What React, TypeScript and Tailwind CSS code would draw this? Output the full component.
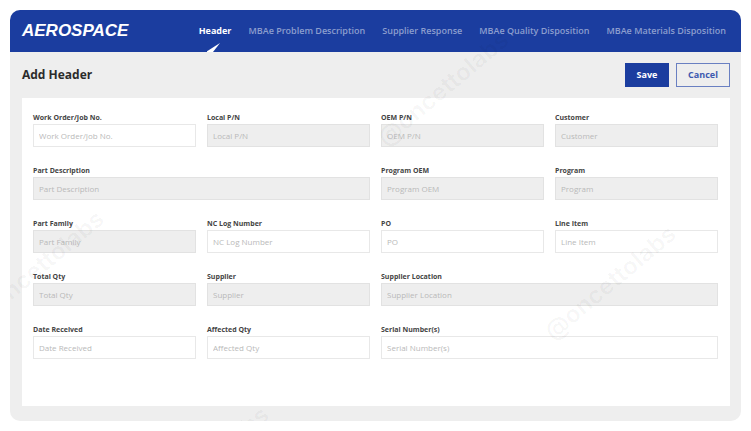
import { clsx } from "clsx";

type Field = {
  id: string;
  label: string;
  locked?: boolean;
  span?: "double";
};

const fields: Field[] = [
  { id: "work-order", label: "Work Order/Job No." },
  { id: "local-pn", label: "Local P/N", locked: true },
  { id: "oem-pn", label: "OEM P/N", locked: true },
  { id: "customer", label: "Customer", locked: true },
  { id: "part-description", label: "Part Description", locked: true, span: "double" },
  { id: "program-oem", label: "Program OEM", locked: true },
  { id: "program", label: "Program", locked: true },
  { id: "part-family", label: "Part Family", locked: true },
  { id: "nc-log-number", label: "NC Log Number" },
  { id: "po", label: "PO" },
  { id: "line-item", label: "Line Item" },
  { id: "total-qty", label: "Total Qty", locked: true },
  { id: "supplier", label: "Supplier", locked: true },
  { id: "supplier-location", label: "Supplier Location", locked: true, span: "double" },
  { id: "date-received", label: "Date Received" },
  { id: "affected-qty", label: "Affected Qty" },
  { id: "serial-numbers", label: "Serial Number(s)", span: "double" },
];

const tabs = [
  "Header",
  "MBAe Problem Description",
  "Supplier Response",
  "MBAe Quality Disposition",
  "MBAe Materials Disposition",
];

function TopBar() {
  return (
    <header className="flex h-[42px] items-center justify-between bg-[#1b3d9f] pr-[15px] pl-3">
      <a
        href="#home"
        className="font-['Liberation_Sans',Arial,sans-serif] text-[17px] leading-5 font-bold text-white italic"
      >
        AEROSPACE
      </a>
      <nav className="flex h-full gap-[17px] text-[9px] font-semibold whitespace-nowrap">
        {tabs.map((tab, index) => (
          <a
            key={tab}
            href="#tab"
            aria-current={index === 0 ? "page" : undefined}
            className={clsx(
              "relative flex h-full items-center",
              index === 0 ? "font-bold text-white" : "text-[#8c9dce]",
            )}
          >
            {tab}
            {index === 0 && (
              <svg
                aria-hidden="true"
                viewBox="0 0 14 10"
                className="absolute bottom-0 left-2 h-2.5 w-3.5"
              >
                <path d="M-1 10 13 1 6 10Z" fill="#fff" />
              </svg>
            )}
          </a>
        ))}
      </nav>
    </header>
  );
}

function FormField({ id, label, locked, span }: Field) {
  return (
    <div className={clsx("flex flex-col", span === "double" && "col-span-2")}>
      <label htmlFor={id} className="pt-px text-[7px] leading-3 font-bold text-[#444]">
        {label}
      </label>
      <input
        id={id}
        type="text"
        placeholder={label}
        disabled={locked}
        className={clsx(
          "h-[23px] w-full border px-[5px] text-[8px] outline-none placeholder:text-[#b9b9b9] placeholder:opacity-100",
          locked ? "border-[#e2e2e2] bg-[#eee]" : "border-[#e8e8e8] bg-white",
        )}
      />
    </div>
  );
}

const markPlaces = [
  "top-[119px] left-[371px]",
  "top-[313px] left-[538px]",
  "top-[298px] -left-[34px]",
  "top-[494px] left-[131px]",
];

function Watermarks() {
  return (
    <div aria-hidden="true" className="pointer-events-none absolute inset-0">
      {markPlaces.map((place) => (
        <span
          key={place}
          className={clsx(
            "absolute origin-left -rotate-40 font-['Inter',sans-serif] text-2xl leading-none font-bold text-black/[0.03]",
            place,
          )}
        >
          @oncettolabs
        </span>
      ))}
    </div>
  );
}

export default function App() {
  return (
    <div className="bg-white p-2.5 font-['Open_Sans','Noto_Sans',sans-serif]">
      <div className="relative overflow-hidden rounded-[10px] bg-[#eee]">
        <TopBar />
        <main className="pr-[11px] pb-[15px] pl-3">
          <div className="flex h-[46px] items-center justify-between">
            <h1 className="text-[12px] leading-4 font-bold text-[#2b2b2b]">Add Header</h1>
            <div className="flex gap-[7px] text-[9px] font-bold">
              <button type="button" className="h-6 w-11 bg-[#1b3d9f] text-white">
                Save
              </button>
              <button
                type="button"
                className="h-6 w-[54px] border border-[#6a80c2] text-[#3d5ab0]"
              >
                Cancel
              </button>
            </div>
          </div>
          <form className="grid grid-cols-4 gap-x-[11px] gap-y-[17px] bg-white pt-[13px] pr-3 pb-[47px] pl-[11px]">
            {fields.map((field) => (
              <FormField key={field.id} {...field} />
            ))}
          </form>
        </main>
        <Watermarks />
      </div>
    </div>
  );
}
